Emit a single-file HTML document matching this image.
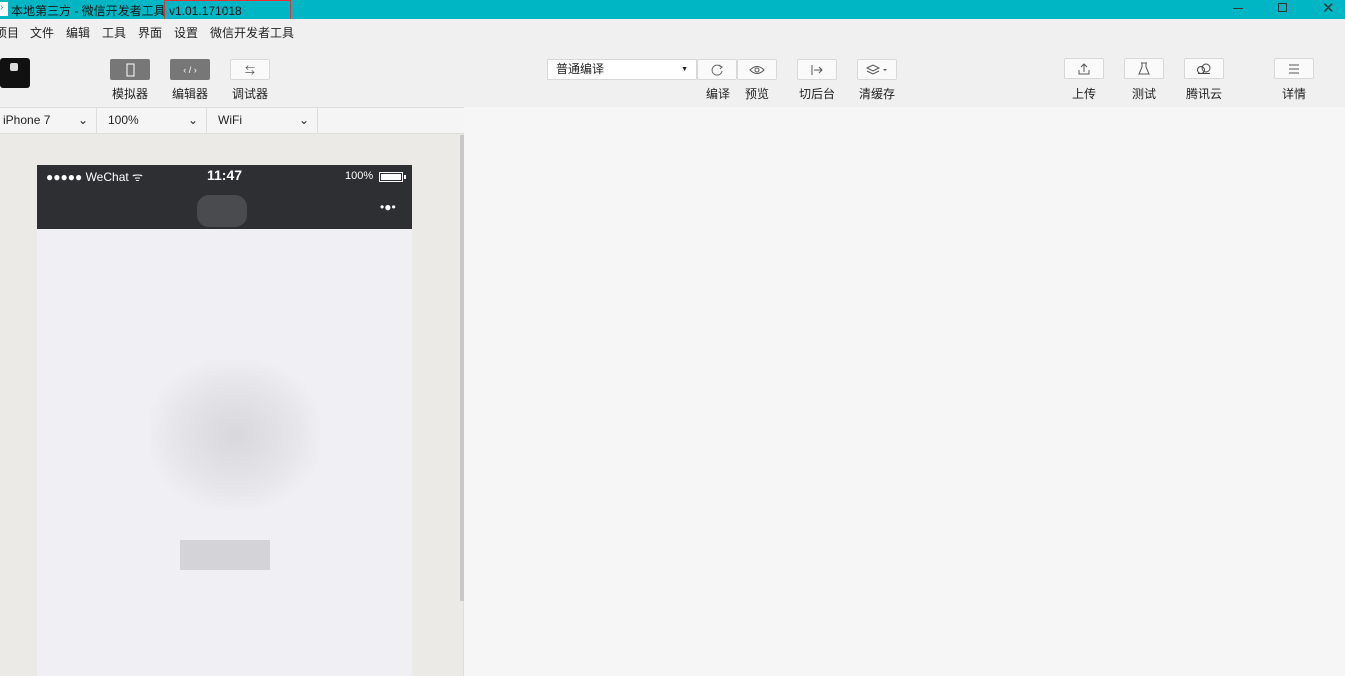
<!DOCTYPE html>
<html><head><meta charset="utf-8"><style>
*{margin:0;padding:0;box-sizing:border-box}
body{width:1345px;height:676px;overflow:hidden;background:#f5f6f5;font-family:"Liberation Sans","Noto Sans CJK SC",sans-serif;font-size:12px;color:#222;position:relative}
.abs{position:absolute}
.title{left:0;top:0;width:1345px;height:19px;background:#00b6c4;color:#111;font-size:12px}
.menu{left:0;top:19px;width:1345px;height:26px;background:#f0f0f0}
.menu span{position:absolute;top:5px}
.tool{left:0;top:45px;width:1345px;height:62px;background:#f0f0f0}
.btn{position:absolute;width:40px;height:21px;border:1px solid #d8d8d8;background:#fafafa;border-radius:2px;display:flex;align-items:center;justify-content:center}
.lbl{position:absolute;font-size:12px;color:#222;text-align:center;width:60px}
.sel{position:absolute;top:107px;height:27px;border-right:1px solid #ddd;line-height:26px;padding-left:3px;font-size:12px}
svg{display:block}
</style></head><body>
<div class="abs title"><span class="abs" style="left:0;top:2px;width:8px;height:14px;background:#fff;color:#0a8;font-size:10px">›</span><span class="abs" style="left:11px;top:2px">本地第三方 - 微信开发者工具 v1.01.171018</span></div>
<div class="abs" style="left:164px;top:0;width:127px;height:31px;border:1px solid #d33"></div>
<div class="abs" style="left:1233px;top:8px;width:10px;height:1px;background:#333"></div>
<div class="abs" style="left:1278px;top:3px;width:9px;height:9px;border:1px solid #333"></div>
<div class="abs" style="left:1322px;top:-1px;font-size:15px;color:#333">✕</div>
<div class="abs menu"><span style="left:-5px">项目</span><span style="left:30px">文件</span><span style="left:66px">编辑</span><span style="left:102px">工具</span><span style="left:138px">界面</span><span style="left:174px">设置</span><span style="left:210px">微信开发者工具</span></div>
<div class="abs tool">
<div class="abs" style="left:0;top:13px;width:30px;height:30px;background:#111;border-radius:3px"><div class="abs" style="left:10px;top:5px;width:8px;height:8px;background:#ddd;border-radius:2px"></div></div>
<div class="btn" style="left:110px;top:14px;background:#777;border-color:#777"><svg width="10" height="14"><rect x="2" y="1" width="7" height="12" fill="none" stroke="#fff"/></svg></div>
<div class="btn" style="left:170px;top:14px;background:#777;border-color:#777;color:#fff;font-size:9px">‹ / ›</div>
<div class="btn" style="left:230px;top:14px;font-size:10px;color:#555">⇆</div>
<div class="lbl" style="left:100px;top:40px">模拟器</div><div class="lbl" style="left:160px;top:40px">编辑器</div><div class="lbl" style="left:220px;top:40px">调试器</div>
<div class="abs" style="left:547px;top:14px;width:150px;height:21px;border:1px solid #d8d8d8;background:#fff;padding-left:8px;line-height:19px">普通编译<span style="position:absolute;right:8px;font-size:7px">▼</span></div>
<div class="btn" style="left:697px;top:14px"><svg width="14" height="14"><path d="M11 4 A5 5 0 1 0 12 8" fill="none" stroke="#666"/><path d="M9 2 L12 4 L10 6" fill="none" stroke="#666"/></svg></div>
<div class="btn" style="left:737px;top:14px"><svg width="16" height="12"><path d="M1 6 Q8 -1 15 6 Q8 13 1 6Z" fill="none" stroke="#555"/><circle cx="8" cy="6" r="2" fill="none" stroke="#555"/></svg></div>
<div class="btn" style="left:797px;top:14px"><svg width="14" height="12"><path d="M2 1V11M4 6H12M9 3L12 6L9 9" fill="none" stroke="#555"/></svg></div>
<div class="btn" style="left:857px;top:14px"><svg width="22" height="12"><path d="M1 4L7 1L13 4L7 7Z M1 7L7 10L13 7" fill="none" stroke="#555"/><path d="M17 5H21L19 7Z" fill="#555"/></svg></div>
<div class="lbl" style="left:688px;top:40px">编译</div><div class="lbl" style="left:727px;top:40px">预览</div><div class="lbl" style="left:787px;top:40px">切后台</div><div class="lbl" style="left:847px;top:40px">清缓存</div>
<div class="btn" style="left:1064px;top:13px"><svg width="14" height="14"><path d="M2 8V12H12V8M7 10V2M4 5L7 2L10 5" fill="none" stroke="#555"/></svg></div>
<div class="btn" style="left:1124px;top:13px"><svg width="14" height="14"><path d="M4 1H10M5 1V5L2 12H12L9 5V1" fill="none" stroke="#555"/></svg></div>
<div class="btn" style="left:1184px;top:13px"><svg width="16" height="12"><circle cx="5" cy="7" r="3.5" fill="none" stroke="#444"/><circle cx="10" cy="5" r="4" fill="none" stroke="#444"/><path d="M2 10.5H14" stroke="#444"/></svg></div>
<div class="btn" style="left:1274px;top:13px"><svg width="12" height="10"><path d="M1 1H11M1 5H11M1 9H11" stroke="#555"/></svg></div>
<div class="lbl" style="left:1054px;top:40px">上传</div><div class="lbl" style="left:1114px;top:40px">测试</div><div class="lbl" style="left:1174px;top:40px">腾讯云</div><div class="lbl" style="left:1264px;top:40px">详情</div>
</div>
<div class="abs" style="left:0;top:107px;width:464px;height:569px;background:#ebeae7;border-right:1px solid #ddd"></div>
<div class="abs" style="left:0;top:107px;width:464px;height:27px;background:#f5f5f5;border-bottom:1px solid #ddd;border-top:1px solid #ddd"></div>
<div class="sel" style="left:0;width:97px">iPhone 7<span style="position:absolute;right:8px">⌄</span></div>
<div class="sel" style="left:97px;width:110px;padding-left:11px">100%<span style="position:absolute;right:8px">⌄</span></div>
<div class="sel" style="left:207px;width:111px;padding-left:11px">WiFi<span style="position:absolute;right:8px">⌄</span></div>
<div class="abs" style="left:460px;top:135px;width:4px;height:466px;background:#c8c8c8"></div>
<div class="abs" style="left:37px;top:165px;width:375px;height:64px;background:#2e2f33;color:#fff">
<span class="abs" style="left:9px;top:3px;font-size:12px">●●●●● WeChat ᯤ</span>
<span class="abs" style="left:170px;top:2px;font-size:14px;font-weight:bold">11:47</span>
<span class="abs" style="left:308px;top:5px;font-size:11px">100%</span>
<span class="abs" style="left:342px;top:7px;width:24px;height:10px;border:1px solid #fff;padding:1px"><span style="display:block;width:100%;height:100%;background:#fff"></span></span>
<span class="abs" style="left:367px;top:10px;width:2px;height:4px;background:#fff"></span>
<span class="abs" style="left:343px;top:35px;font-size:12px">•●•</span>
<span class="abs" style="left:160px;top:30px;width:50px;height:32px;background:#4a4b4f;border-radius:12px"></span>
</div>
<div class="abs" style="left:37px;top:229px;width:375px;height:447px;background:#efeff4"></div>
<div class="abs" style="left:150px;top:360px;width:170px;height:150px;background:radial-gradient(ellipse at center,#d8d8dc 0%,#e6e6ea 50%,#efeff4 75%)"></div>
<div class="abs" style="left:180px;top:540px;width:90px;height:30px;background:#d4d3d8"></div>
</body></html>
